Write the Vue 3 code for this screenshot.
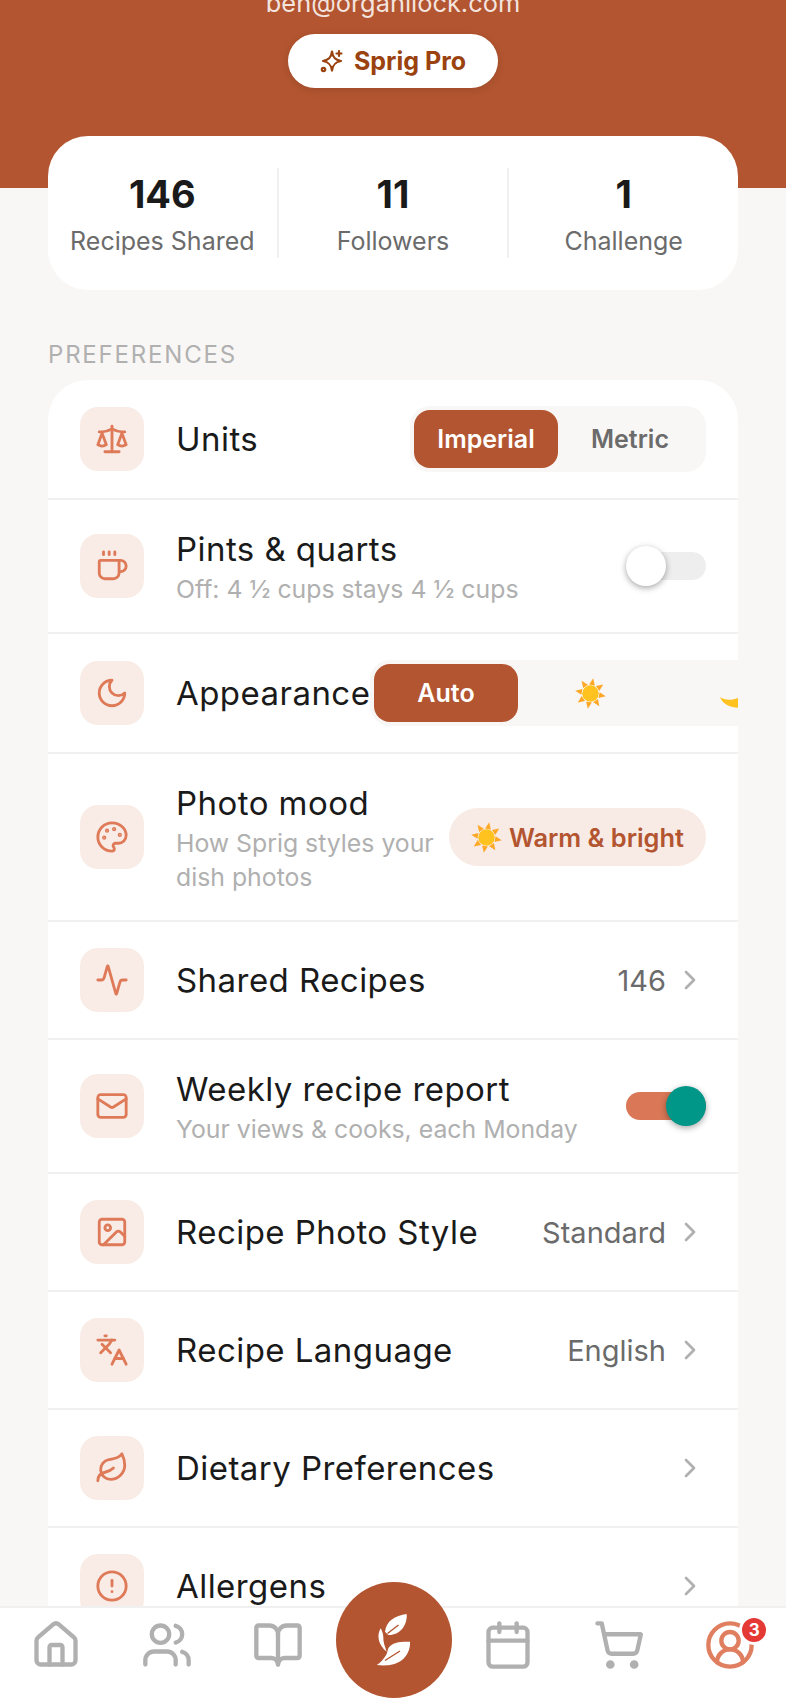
<template>
  <div class="screen">
    <div class="scroll">
      <header class="hero">
        <div class="email">ben@organilock.com</div>
        <button class="pro-btn">
          <svg class="pro-icon" viewBox="0 0 24 24" v-html="icons.sparkle"></svg>
          <span>Sprig Pro</span>
        </button>
      </header>

      <section class="stats">
        <div v-for="s in stats" :key="s.label" class="stat">
          <div class="stat-num">{{ s.num }}</div>
          <div class="stat-label">{{ s.label }}</div>
        </div>
      </section>

      <div class="section-title">PREFERENCES</div>

      <section class="card">
        <div v-for="row in rows" :key="row.title" class="row">
          <div class="row-icon">
            <svg viewBox="0 0 24 24" v-html="icons[row.icon]"></svg>
          </div>
          <div class="row-text" :class="{ fixed: row.kind === 'appearance' }">
            <div class="row-title">{{ row.title }}</div>
            <div v-if="row.sub" class="row-sub">{{ row.sub }}</div>
          </div>

          <div v-if="row.kind === 'units'" class="seg">
            <div class="seg-item active">Imperial</div>
            <div class="seg-item">Metric</div>
          </div>

          <div v-else-if="row.kind === 'appearance'" class="seg seg-wide">
            <div class="seg-item active">Auto</div>
            <div class="seg-item"><svg class="sun" viewBox="0 0 32 32" v-html="sun"></svg></div>
            <div class="seg-item">
              <svg class="moon" viewBox="0 0 32 32"><path d="M2 20C8 24 16 24 26 18L26 30C18 32 6 30 2 20Z" fill="#FFC21F" /></svg>
            </div>
          </div>

          <div v-else-if="row.kind === 'toggle'" class="toggle" :class="{ on: row.on }">
            <span class="thumb"></span>
          </div>

          <div v-else-if="row.kind === 'mood'" class="mood">
            <svg class="sun" viewBox="0 0 32 32" v-html="sun"></svg>
            <span>Warm &amp; bright</span>
          </div>

          <div v-else class="row-end">
            <span v-if="row.value" class="row-value">{{ row.value }}</span>
            <svg class="chev" viewBox="0 0 24 24"><path d="m9 18 6-6-6-6" /></svg>
          </div>
        </div>
      </section>
    </div>

    <nav class="nav">
      <div v-for="item in navLeft" :key="item" class="nav-item">
        <svg viewBox="0 0 24 24" v-html="icons[item]"></svg>
      </div>
      <div class="nav-item">
        <div class="fab">
          <svg viewBox="0 0 60 60">
            <path d="M42.7 4C31 5.500 22 11 21 21.700L24.300 25C35 25.500 43.500 16 42.700 4Z" fill="#fff" />
            <path d="M23.500 23.500L34.500 15" stroke="#B35530" stroke-width="1.400" fill="none" />
            <path d="M16.700 18.300C12.500 25 14 35 22.700 41.700C21 37 19 31.500 19.300 27C19.400 24 18 21 16.700 18.300Z" fill="#fff" />
            <path d="M46 31.700C38 31.500 28 31.500 24.300 38.300L22.700 44C20 49 16 53 12.700 55C22 56 31 55.500 38 50C43 46 46.500 39 46 31.700Z" fill="#fff" />
            <path d="M21 50.500L36 41" stroke="#B35530" stroke-width="1.400" fill="none" />
          </svg>
        </div>
      </div>
      <div v-for="item in navRight" :key="item" class="nav-item">
        <svg viewBox="0 0 24 24" v-html="icons[item]"></svg>
      </div>
      <div class="nav-item me">
        <span class="nav-icon-wrap">
          <svg viewBox="0 0 24 24" v-html="icons.profile"></svg>
          <span class="badge">3</span>
        </span>
      </div>
    </nav>
  </div>
</template>

<script setup>
const stats = [
  { num: '146', label: 'Recipes Shared' },
  { num: '11', label: 'Followers' },
  { num: '1', label: 'Challenge' }
]

const rows = [
  { icon: 'scale', title: 'Units', kind: 'units' },
  { icon: 'coffee', title: 'Pints & quarts', sub: 'Off: 4 ½ cups stays 4 ½ cups', kind: 'toggle', on: false },
  { icon: 'moon', title: 'Appearance', kind: 'appearance' },
  { icon: 'palette', title: 'Photo mood', sub: 'How Sprig styles your dish photos', kind: 'mood' },
  { icon: 'activity', title: 'Shared Recipes', value: '146' },
  { icon: 'mail', title: 'Weekly recipe report', sub: 'Your views & cooks, each Monday', kind: 'toggle', on: true },
  { icon: 'image', title: 'Recipe Photo Style', value: 'Standard' },
  { icon: 'languages', title: 'Recipe Language', value: 'English' },
  { icon: 'leaf', title: 'Dietary Preferences' },
  { icon: 'alert', title: 'Allergens' }
]

const navLeft = ['home', 'users', 'book']
const navRight = ['calendar', 'cart']

const icons = {
  sparkle: '<path d="M12 2.500c.7 5.800 3 8.300 9 9.500c-6 1.200-8.300 3.800-9 9.500c-.7-5.700-3-8.300-9-9.500c6-1.200 8.300-3.700 9-9.500Z"/><path d="M19 2v5M16.500 4.500h5"/><circle cx="3.500" cy="20.500" r="1.700" fill="#fff"/>',
  scale: '<path d="m16 16 3-8 3 8c-.87.65-1.920 1-3 1s-2.130-.35-3-1Z"/><path d="m2 16 3-8 3 8c-.87.65-1.920 1-3 1s-2.130-.35-3-1Z"/><path d="M7 21h10"/><path d="M12 3v18"/><path d="M3 7h2c2 0 5-1 7-2 2 1 5 2 7 2h2"/>',
  coffee: '<path d="M10 2v2"/><path d="M14 2v2"/><path d="M16 8a1 1 0 0 1 1 1v8a4 4 0 0 1-4 4H7a4 4 0 0 1-4-4V9a1 1 0 0 1 1-1h14a4 4 0 1 1 0 8h-1"/><path d="M6 2v2"/>',
  moon: '<path d="M12 3a6 6 0 0 0 9 9 9 9 0 1 1-9-9Z"/>',
  palette: '<circle cx="13.500" cy="6.500" r=".5" fill="currentColor"/><circle cx="17.500" cy="10.500" r=".5" fill="currentColor"/><circle cx="8.500" cy="7.500" r=".5" fill="currentColor"/><circle cx="6.500" cy="12.500" r=".5" fill="currentColor"/><path d="M12 2C6.500 2 2 6.500 2 12s4.500 10 10 10c.926 0 1.648-.746 1.648-1.688 0-.437-.18-.835-.437-1.125-.29-.289-.438-.652-.438-1.125a1.640 1.640 0 0 1 1.668-1.668h1.996c3.051 0 5.555-2.503 5.555-5.554C21.965 6.012 17.461 2 12 2z"/>',
  activity: '<path d="M22 12h-2.480a2 2 0 0 0-1.930 1.460l-2.350 8.360a.25.25 0 0 1-.48 0L9.240 2.180a.25.25 0 0 0-.48 0l-2.350 8.360A2 2 0 0 1 4.490 12H2"/>',
  mail: '<rect width="20" height="16" x="2" y="4" rx="2"/><path d="m22 7-8.970 5.700a1.940 1.940 0 0 1-2.060 0L2 7"/>',
  image: '<rect width="18" height="18" x="3" y="3" rx="2" ry="2"/><circle cx="9" cy="9" r="2"/><path d="m21 15-3.086-3.086a2 2 0 0 0-2.828 0L6 21"/>',
  languages: '<path d="m5 8 6 6"/><path d="m4 14 6-6 2-3"/><path d="M2 5h12"/><path d="M7 2h1"/><path d="m22 22-5-10-5 10"/><path d="M14 18h6"/>',
  leaf: '<path d="M11 20A7 7 0 0 1 9.800 6.100C15.500 5 17 4.480 19 2c1 2 2 4.180 2 8 0 5.500-4.780 10-10 10Z"/><path d="M2 21c0-3 1.850-5.360 5.080-6C9.500 14.520 12 13 13 12"/>',
  alert: '<circle cx="12" cy="12" r="10"/><path d="M12 8v4"/><path d="M12 16h.01"/>',
  home: '<path d="M15 21v-8a1 1 0 0 0-1-1h-4a1 1 0 0 0-1 1v8"/><path d="M3 10a2 2 0 0 1 .709-1.528l7-5.999a2 2 0 0 1 2.582 0l7 5.999A2 2 0 0 1 21 10v9a2 2 0 0 1-2 2H5a2 2 0 0 1-2-2z"/>',
  users: '<path d="M16 21v-2a4 4 0 0 0-4-4H6a4 4 0 0 0-4 4v2"/><circle cx="9" cy="7" r="4"/><path d="M22 21v-2a4 4 0 0 0-3-3.870"/><path d="M16 3.130a4 4 0 0 1 0 7.750"/>',
  book: '<path d="M12 7v14"/><path d="M3 18a1 1 0 0 1-1-1V4a1 1 0 0 1 1-1h5a4 4 0 0 1 4 4 4 4 0 0 1 4-4h5a1 1 0 0 1 1 1v13a1 1 0 0 1-1 1h-6a3 3 0 0 0-3 3 3 3 0 0 0-3-3z"/>',
  calendar: '<path d="M8 2v4"/><path d="M16 2v4"/><rect width="18" height="18" x="3" y="4" rx="2"/><path d="M3 10h18"/>',
  cart: '<circle cx="8" cy="21" r="1" fill="currentColor"/><circle cx="19" cy="21" r="1" fill="currentColor"/><path d="M2.050 2.050h2l2.660 12.420a2 2 0 0 0 2 1.580h9.780a2 2 0 0 0 1.950-1.570l1.650-7.430H5.120"/>',
  profile: '<path d="M18 20a6 6 0 0 0-12 0"/><circle cx="12" cy="10" r="4"/><circle cx="12" cy="12" r="10"/>'
}

// emoji sun: eight rays round a yellow disc
const sun =
  [0, 45, 90, 135, 180, 225, 270, 315]
    .map(a => `<polygon points="13,7 19,7 16,0" fill="#FFA726" transform="rotate(${a + 10} 16 16)"/>`)
    .join('') + '<circle cx="16" cy="16" r="8.500" fill="#FFC21F"/>'
</script>

<style>
html,
body {
  margin: 0;
  background: #f9f7f5;
}
</style>

<style scoped>
.screen {
  position: relative;
  width: 786px;
  height: 1704px;
  overflow: hidden;
  background: #f9f7f5;
  font-family: 'Inter', 'Noto Sans', sans-serif;
  color: #1a1a1a;
}

.scroll {
  margin-top: -18px;
}

.hero {
  background: #b35530;
  padding-bottom: 100px;
  display: flex;
  flex-direction: column;
  align-items: center;
}

.email {
  height: 52px;
  line-height: 42px;
  font-size: 25.4px;
  color: rgba(255, 255, 255, 0.85);
}

.pro-btn {
  display: flex;
  align-items: center;
  justify-content: center;
  gap: 10px;
  width: 210px;
  height: 54px;
  border: 0;
  border-radius: 27px;
  background: #fff;
  color: #9a4210;
  font: 700 25px 'Inter', sans-serif;
  box-shadow: 0 2px 8px rgba(0, 0, 0, 0.12);
}

.pro-icon {
  width: 24px;
  height: 24px;
  fill: none;
  stroke: currentColor;
  stroke-width: 2.200;
  stroke-linecap: round;
  stroke-linejoin: round;
}

.stats {
  display: flex;
  margin: -52px 48px 0;
  padding: 32px 0;
  border-radius: 40px;
  background: #fff;
}

.stat {
  flex: 1;
  height: 90px;
  text-align: center;
  border-left: 2px solid #f0f0f0;
}

.stat:first-child {
  border-left: 0;
}

.stat-num {
  font-size: 38px;
  font-weight: 700;
  line-height: 52px;
}

.stat-label {
  font-size: 25px;
  line-height: 42px;
  color: #6b6b6b;
}

.section-title {
  margin: 50px 48px 10px;
  font-size: 24px;
  line-height: 30px;
  letter-spacing: 1.8px;
  color: #b0b0b0;
}

.card {
  margin: 0 48px;
  border-radius: 40px;
  background: #fff;
  overflow: hidden;
}

.row {
  display: flex;
  align-items: center;
  padding: 26px 32px;
  border-bottom: 2px solid #f0f0f0;
}

.row-icon {
  flex: none;
  display: flex;
  align-items: center;
  justify-content: center;
  width: 64px;
  height: 64px;
  margin-right: 32px;
  border-radius: 18px;
  background: #f9ece7;
  color: #de7a58;
}

.row-icon svg {
  width: 34px;
  height: 34px;
  fill: none;
  stroke: currentColor;
  stroke-width: 2;
  stroke-linecap: round;
  stroke-linejoin: round;
}

.row-text {
  flex: 1;
  min-width: 0;
}

.row-text.fixed {
  flex: none;
  width: 194px;
}

.row-title {
  font-size: 33px;
  line-height: 46px;
  letter-spacing: 0.45px;
  white-space: nowrap;
}

.row-sub {
  font-size: 24.8px;
  line-height: 34px;
  color: #b0b0b0;
}

.seg {
  flex: none;
  display: flex;
  padding: 4px;
  border-radius: 20px;
  background: #f9f7f5;
}

.seg-item {
  width: 144px;
  height: 58px;
  display: flex;
  align-items: center;
  justify-content: center;
  border-radius: 16px;
  font-size: 25px;
  font-weight: 600;
  color: #6b6b6b;
}

.seg-item.active {
  background: #b35530;
  color: #fff;
}

.seg-item .sun {
  width: 31px;
  height: 31px;
}

.seg-wide {
  margin-right: -200px;
}

.moon {
  width: 32px;
  height: 32px;
}

.toggle {
  position: relative;
  flex: none;
  width: 80px;
  height: 28px;
  border-radius: 14px;
  background: #eeeeee;
}

.toggle.on {
  background: #d97757;
}

.thumb {
  position: absolute;
  top: -6px;
  left: 0;
  width: 40px;
  height: 40px;
  border-radius: 50%;
  background: #fff;
  box-shadow: 0 2px 6px rgba(0, 0, 0, 0.35);
}

.toggle.on .thumb {
  left: 40px;
  background: #009688;
}

.mood {
  flex: none;
  display: flex;
  align-items: center;
  gap: 7px;
  height: 58px;
  padding: 0 22px;
  border-radius: 29px;
  background: #f8ebe6;
  color: #b35530;
  font-size: 25.4px;
  font-weight: 600;
}

.mood .sun {
  width: 31px;
  height: 31px;
}

.row-end {
  flex: none;
  display: flex;
  align-items: center;
  gap: 8px;
}

.row-value {
  font-size: 29px;
  color: #6b6b6b;
}

.chev {
  width: 32px;
  height: 32px;
  fill: none;
  stroke: #b0b0b0;
  stroke-width: 2;
  stroke-linecap: round;
  stroke-linejoin: round;
}

.nav {
  position: absolute;
  left: 0;
  right: 0;
  bottom: 0;
  height: 98px;
  padding-bottom: 22px;
  box-sizing: border-box;
  display: flex;
  align-items: center;
  background: #fff;
  border-top: 2px solid #f0f0f0;
}

.nav-item {
  flex: 1;
  display: flex;
  align-items: center;
  justify-content: center;
  color: #b0b0b0;
}

.nav-item > svg,
.nav-icon-wrap > svg {
  display: block;
  width: 52px;
  height: 52px;
  fill: none;
  stroke: currentColor;
  stroke-width: 2;
  stroke-linecap: round;
  stroke-linejoin: round;
}

.nav-item.me {
  color: #e07f5f;
}

.nav-icon-wrap {
  position: relative;
}

.badge {
  position: absolute;
  top: -4px;
  right: -13px;
  width: 24px;
  height: 24px;
  display: flex;
  align-items: center;
  justify-content: center;
  border: 3px solid #fff;
  border-radius: 50%;
  background: #e53935;
  color: #fff;
  font-size: 17px;
  font-weight: 700;
}

.fab {
  flex: none;
  width: 116px;
  height: 116px;
  margin-bottom: 10px;
  margin-left: 2px;
  display: flex;
  align-items: center;
  justify-content: center;
  border-radius: 50%;
  background: #b35530;
}

.fab svg {
  width: 60px;
  height: 60px;
}
</style>
